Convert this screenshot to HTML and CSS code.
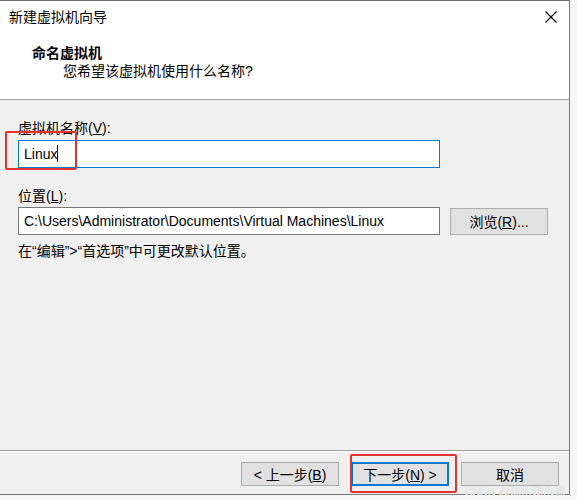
FILE: index.html
```html
<!DOCTYPE html>
<html lang="zh-CN">
<head>
    <meta charset="UTF-8">
    <title>新建虚拟机向导</title>
    <link rel="stylesheet" href="styles.css">
</head>
<body>
    <div class="window">
        <div class="titlebar">
            <span class="title">新建虚拟机向导</span>
            <svg class="close" width="12" height="12" viewBox="0 0 12 12">
                <path d="M0.5 0.5 L11.5 11.5 M11.5 0.5 L0.5 11.5" stroke="#000" stroke-width="1.1" fill="none"/>
            </svg>
        </div>

        <div class="header">
            <div class="heading">命名虚拟机</div>
            <div class="subheading">您希望该虚拟机使用什么名称?</div>
        </div>

        <div class="content">
            <div class="label">虚拟机名称(<u>V</u>):</div>
            <div class="row">
                <div class="textbox focused">Linux<span class="caret"></span></div>
            </div>

            <div class="label label-gap">位置(<u>L</u>):</div>
            <div class="row">
                <div class="textbox">C:\Users\Administrator\Documents\Virtual Machines\Linux</div>
                <button class="btn browse">浏览(<u>R</u>)...</button>
            </div>

            <div class="hint">在“编辑”&gt;“首选项”中可更改默认位置。</div>

            <div class="mark mark-name"></div>
        </div>

        <div class="footer">
            <button class="btn">&lt; 上一步(<u>B</u>)</button>
            <button class="btn default">下一步(<u>N</u>) &gt;</button>
            <button class="btn">取消</button>
            <div class="mark mark-next"></div>
            <span class="watermark">CSDN @湘山湖水洲</span>
        </div>
    </div>
</body>
</html>
```

FILE: styles.css
```css
body {
    margin: 0;
    padding: 0;
    background-color: #f7f7f7;
    font-family: "Liberation Sans", "Noto Sans CJK SC", sans-serif;
    font-size: 14px;
    color: #000;
}

.window {
    width: 569px;
    height: 493px;
    background-color: #f0f0f0;
    border-top: 1px solid #6e6e6e;
    border-right: 1px solid #7a7a7a;
    border-bottom: 1px solid #7a7a7a;
    display: flex;
    flex-direction: column;
}

.titlebar {
    height: 32px;
    background-color: #fff;
    display: flex;
    align-items: center;
    justify-content: space-between;
    padding: 0 12px 0 9px;
}

.title {
    line-height: 32px;
}

.close {
    display: block;
}

.header {
    height: 55px;
    padding: 11px 0 0 32px;
    background-color: #fff;
    border-bottom: 1px solid #a0a0a0;
}

.heading {
    font-weight: bold;
    line-height: 18px;
}

.subheading {
    line-height: 18px;
    padding-left: 31px;
}

.content {
    flex: 1;
    position: relative;
    padding: 19px 0 0 18px;
}

.label {
    height: 18px;
    line-height: 18px;
    margin-bottom: 3px;
}

.label-gap {
    margin-top: 19px;
    margin-bottom: 2px;
}

.row {
    display: flex;
    align-items: center;
}

.textbox {
    box-sizing: border-box;
    width: 422px;
    height: 28px;
    line-height: 26px;
    padding: 0 5px;
    background-color: #fff;
    border: 1px solid #7a7a7a;
    white-space: nowrap;
    overflow: hidden;
}

.textbox.focused {
    border-color: #0078d7;
}

.caret {
    display: inline-block;
    width: 0;
    height: 17px;
    border-left: 1px solid #000;
    vertical-align: -3px;
}

.btn {
    box-sizing: border-box;
    width: 98px;
    height: 24px;
    padding: 0;
    font-family: inherit;
    font-size: 14px;
    color: #000;
    background-color: #e1e1e1;
    border: 1px solid #adadad;
}

.browse {
    height: 27px;
    margin-left: 10px;
}

.btn.default {
    border: 2px solid #0078d7;
}

.hint {
    height: 18px;
    margin-top: 7px;
    line-height: 18px;
}

.footer {
    position: relative;
    height: 32px;
    padding: 11px 10px 0 0;
    border-top: 1px solid #a0a0a0;
    box-shadow: inset 0 1px 0 #fff;
    display: flex;
    justify-content: flex-end;
    align-items: flex-start;
    gap: 12px;
}

.mark {
    position: absolute;
    border: 2px solid #e2332f;
    border-radius: 2px;
}

.mark-name {
    left: 5px;
    top: 31px;
    width: 68px;
    height: 35px;
}

.mark-next {
    left: 350px;
    top: 3px;
    width: 103px;
    height: 35px;
}

.watermark {
    position: absolute;
    right: 4px;
    bottom: -5px;
    font-size: 11px;
    line-height: 13px;
    color: rgba(255, 255, 255, 0.85);
    text-shadow: 0 0 1px #b0b0b0;
}
```
